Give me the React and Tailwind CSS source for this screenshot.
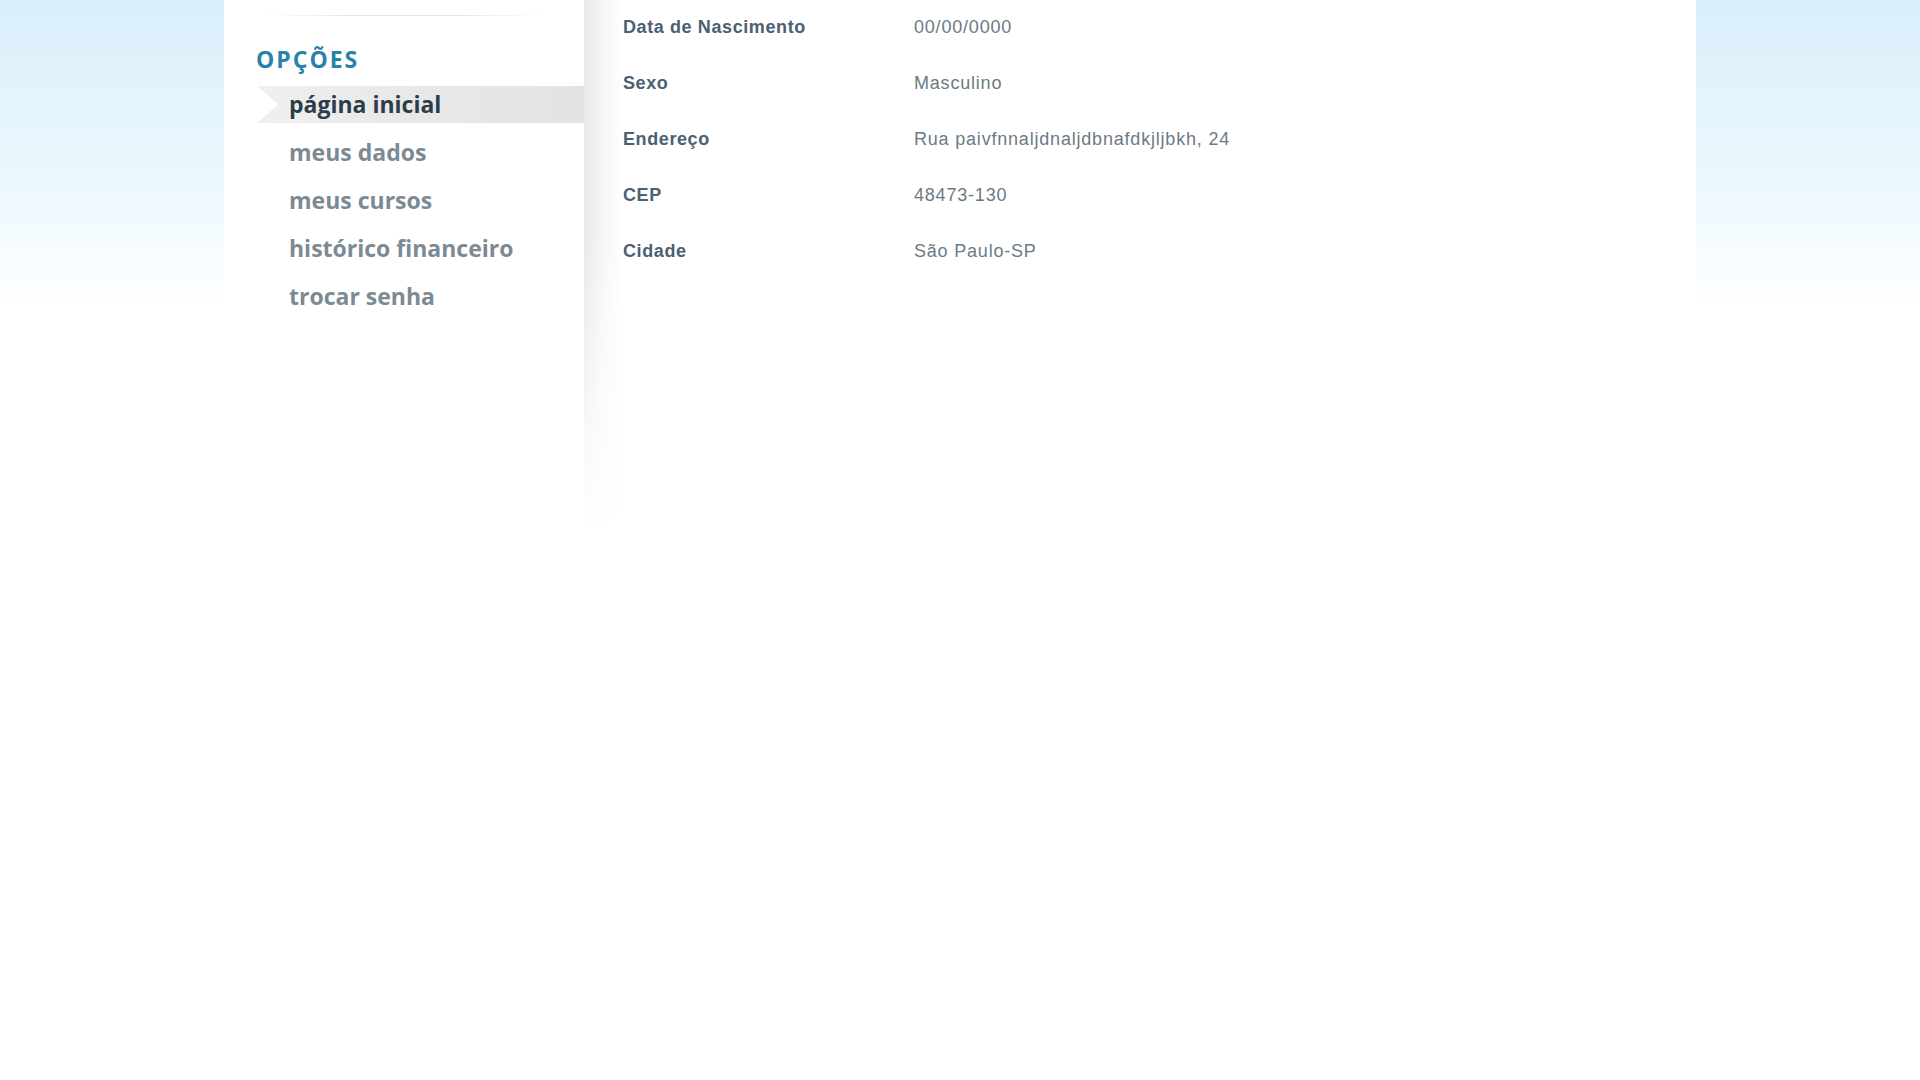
import React from 'react';

const menu = [
  { id: 'inicio', label: 'página inicial', active: true },
  { id: 'dados', label: 'meus dados' },
  { id: 'cursos', label: 'meus cursos' },
  { id: 'financeiro', label: 'histórico financeiro' },
  { id: 'senha', label: 'trocar senha' },
];

const dados = [
  { campo: 'Data de Nascimento', valor: '00/00/0000' },
  { campo: 'Sexo', valor: 'Masculino' },
  { campo: 'Endereço', valor: 'Rua paivfnnaljdnaljdbnafdkjljbkh, 24' },
  { campo: 'CEP', valor: '48473-130' },
  { campo: 'Cidade', valor: 'São Paulo-SP' },
];

const App = () => {
  return (
    <div className="min-h-screen w-full bg-[linear-gradient(to_bottom,#daeffb_0px,#eaf7fd_170px,#ffffff_310px)] flex justify-center">
      <div className="w-[1472px] min-h-screen bg-white flex">
        {/* Menu lateral */}
        <aside className="w-[360px] shrink-0 pt-[15px] font-['Open_Sans',sans-serif]">
          <div className="h-px mx-[40px] bg-[linear-gradient(to_right,rgba(230,230,230,0),#e6e6e6_30%,#e6e6e6_70%,rgba(230,230,230,0))]"></div>
          <h3 className="mt-[32px] pl-[32px] text-[23px] leading-[22px] font-bold tracking-[2px] text-[#2a82a8]">OPÇÕES</h3>
          <ul className="mt-[16px] pl-[33px] flex flex-col gap-[11px]">
            {menu.map((item) => (
              <li key={item.id}>
                <a
                  href="#"
                  className={
                    item.active
                      ? 'h-[37px] flex items-center pl-[32px] text-[23px] font-bold text-[#2c3d4a] bg-[linear-gradient(to_right,#f0f0f0,#e9e9e9_40%,#e3e3e3)] [clip-path:polygon(0_0,100%_0,100%_100%,0_100%,21px_50%)]'
                      : 'h-[37px] flex items-center pl-[32px] text-[23px] font-bold text-[#7c8a93]'
                  }
                >
                  {item.label}
                </a>
              </li>
            ))}
          </ul>
        </aside>

        {/* Dados do aluno */}
        <section className="flex-1 min-h-[540px] pl-[39px] pt-[18px] bg-[linear-gradient(to_bottom,rgba(255,255,255,0)_230px,#ffffff_530px),linear-gradient(to_right,#e8e8e8,#f6f6f6_18px,#ffffff_40px)] font-['Liberation_Sans',Arial,sans-serif]">
          <div className="flex flex-col gap-[38px]">
            {dados.map((linha) => (
              <div key={linha.campo} className="flex text-[18px] leading-[18px]">
                <span className="w-[291px] font-bold tracking-[0.6px] text-[#4b6072]">{linha.campo}</span>
                <span className="tracking-[0.8px] text-[#6c7a84]">{linha.valor}</span>
              </div>
            ))}
          </div>
        </section>
      </div>
    </div>
  );
};

export default App;
